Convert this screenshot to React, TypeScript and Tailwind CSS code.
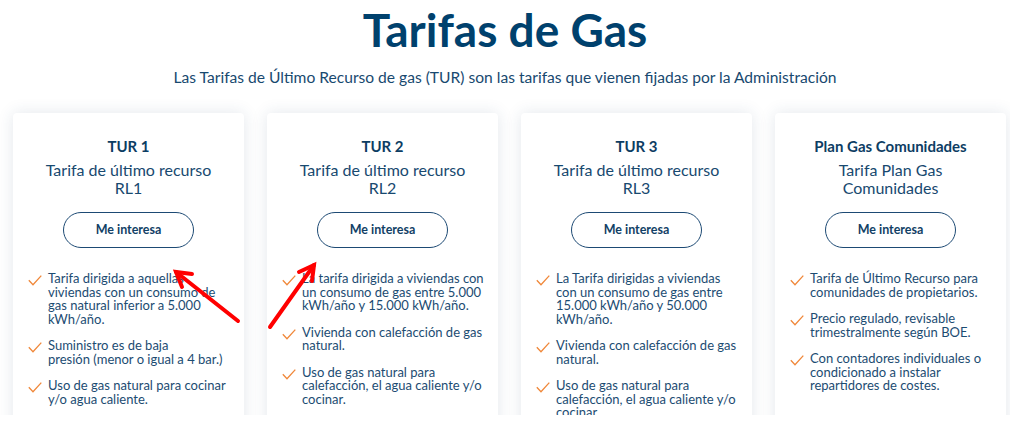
import React from 'react';

type Plan = {
  name: string;
  subtitle: string[];
  features: string[];
};

const plans: Plan[] = [
  {
    name: 'TUR 1',
    subtitle: ['Tarifa de último recurso', 'RL1'],
    features: [
      'Tarifa dirigida a aquellas viviendas con un consumo de gas natural inferior a 5.000 kWh/año.',
      'Suministro es de baja presión\u00a0(menor o igual a 4 bar.)',
      'Uso de gas natural para cocinar y/o agua caliente.',
    ],
  },
  {
    name: 'TUR 2',
    subtitle: ['Tarifa de último recurso', 'RL2'],
    features: [
      'La tarifa dirigida a viviendas con un consumo de gas entre 5.000 kWh/año y 15.000 kWh/año.',
      'Vivienda con calefacción de gas natural.',
      'Uso de gas natural para calefacción, el agua caliente y/o cocinar.',
    ],
  },
  {
    name: 'TUR 3',
    subtitle: ['Tarifa de último recurso', 'RL3'],
    features: [
      'La Tarifa dirigidas a viviendas con un consumo de gas entre 15.000 kWh/año y 50.000 kWh/año.',
      'Vivienda con calefacción de gas natural.',
      'Uso de gas natural para calefacción, el agua caliente y/o cocinar.',
    ],
  },
  {
    name: 'Plan Gas Comunidades',
    subtitle: ['Tarifa Plan Gas', 'Comunidades'],
    features: [
      'Tarifa de Último Recurso para comunidades de propietarios.',
      'Precio regulado, revisable trimestralmente según BOE.',
      'Con contadores individuales o condicionado a instalar repartidores de costes.',
    ],
  },
];

const Check = () => (
  <svg width="14" height="11" viewBox="0 0 14 11" className="mt-[3px] shrink-0">
    <path d="M0.8 5.2 L5 9.8 L13.3 0.6" fill="none" stroke="#f0883a" strokeWidth="1.3" />
  </svg>
);

const PlanCard: React.FC<{ plan: Plan }> = ({ plan }) => (
  <div className="w-[231px] h-[340px] shrink-0 bg-white rounded-[4px] shadow-[0_0_16px_rgba(40,70,110,0.13)] pt-[23px]">
    <h3 className="text-center text-[15px] leading-[20px] font-bold text-[#0d3d63]">{plan.name}</h3>
    <p className="mt-[5px] text-center text-[16px] leading-[18px] text-[#18496f]">
      {plan.subtitle[0]}
      <br />
      {plan.subtitle[1]}
    </p>
    <div className="mt-[15px] flex justify-center">
      <button className="w-[131px] h-[36px] rounded-full border-[1.5px] border-[#1d4a74] text-[12.5px] font-bold text-[#123f66]">
        Me interesa
      </button>
    </div>
    <ul className="mt-[24px] pl-[15px] pr-[14px] flex flex-col gap-[13px]">
      {plan.features.map((f) => (
        <li key={f} className="flex gap-[6px]">
          <Check />
          <span className="text-[13px] leading-[13.5px] text-[#1c4c72]">{f}</span>
        </li>
      ))}
    </ul>
  </div>
);

export default function App() {
  return (
    <div
      className="relative w-[1010px] h-[446px] bg-white overflow-hidden"
      style={{ fontFamily: 'Lato, "Open Sans", sans-serif' }}
    >
      <h1 className="pt-[7px] text-center text-[46px] leading-[46px] font-bold text-[#00416d]">Tarifas de Gas</h1>
      <p className="mt-[14px] text-center text-[15.6px] leading-[20px] text-[#18496f]">
        Las Tarifas de Último Recurso de gas (TUR) son las tarifas que vienen fijadas por la Administración
      </p>

      {/* cards are cut off at the bottom of the capture */}
      <div className="mt-[8px] h-[320px] overflow-hidden pt-[18px] px-[13px] flex gap-[23px]">
        {plans.map((p) => (
          <PlanCard key={p.name} plan={p} />
        ))}
      </div>

      {/* red annotation arrows */}
      <svg className="absolute inset-0 pointer-events-none" width="1010" height="446">
        <g stroke="#ff0000" strokeWidth="4" strokeLinecap="round" fill="none">
          <path d="M238 321 L176 272" />
          <path d="M182 287 L176 272 L192 274" />
          <path d="M270 327 L314 265" />
          <path d="M299 272 L314 265 L312 281" />
        </g>
      </svg>
    </div>
  );
}
